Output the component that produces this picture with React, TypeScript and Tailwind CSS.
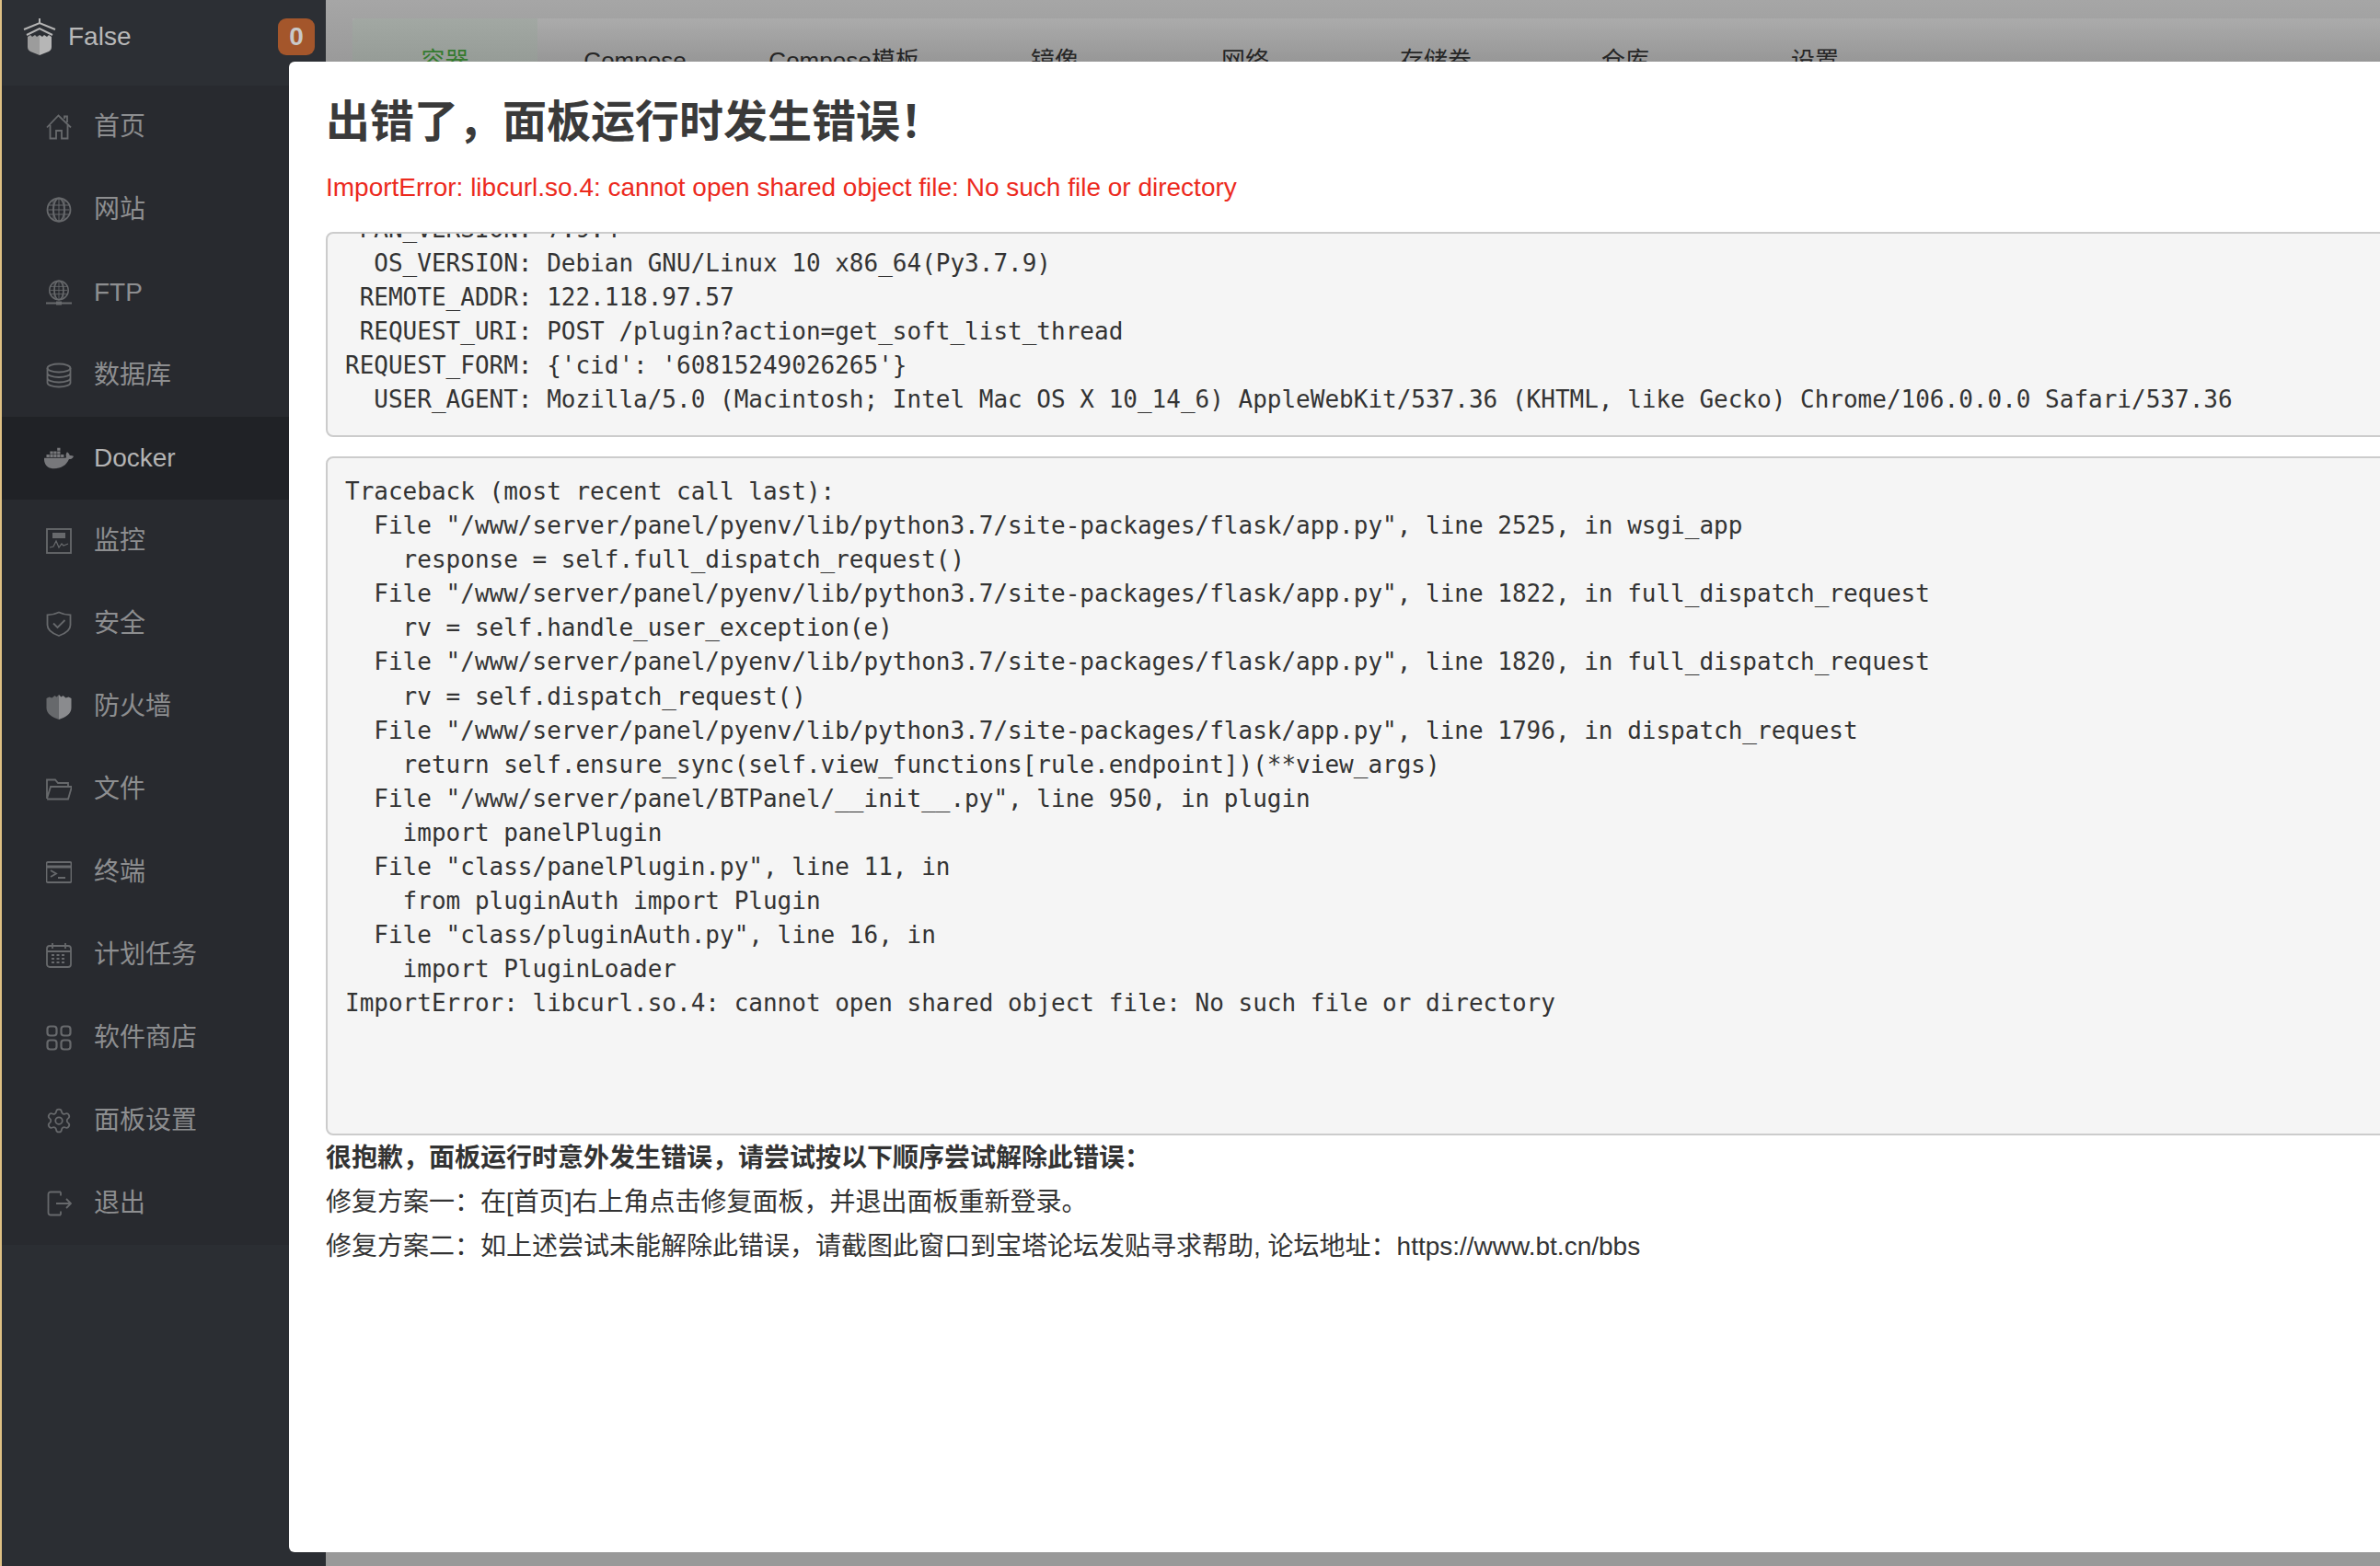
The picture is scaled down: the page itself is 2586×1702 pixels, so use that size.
import React from 'react';
import { FaDocker } from 'react-icons/fa';
import { Settings } from 'lucide-react';

const Globe = () => (
  <>
    <circle cx="14" cy="14" r="12.5" />
    <ellipse cx="14" cy="14" rx="6" ry="12.5" />
    <path d="M14 1.5v25M2.5 9h23M2.5 14h23M2.5 19h23M8 3.5v21M20 3.5v21" strokeWidth="1" />
  </>
);

const NavIcon = ({ children }: { children: React.ReactNode }) => (
  <svg viewBox="0 0 28 28" className="w-[28px] h-[28px] shrink-0 text-[#67696c]" fill="none" stroke="currentColor" strokeWidth="1.8">
    {children}
  </svg>
);

const navItems: { label: string; icon: React.ReactNode; active?: boolean }[] = [
  {
    label: '首页',
    icon: (
      <NavIcon>
        <path d="M1 14.5 13.5 1.5 27 14.5M4.5 12v14.5H11V18h6v8.5h6.500V12M20 5V2.500h3V9" />
      </NavIcon>
    ),
  },
  { label: '网站', icon: <NavIcon><Globe /></NavIcon> },
  {
    label: 'FTP',
    icon: (
      <NavIcon>
        <g transform="translate(2.500 0) scale(0.82)"><Globe /></g>
        <path d="M0 25.500h28" strokeWidth="2" />
        <rect x="11" y="23.500" width="6" height="4" fill="currentColor" stroke="none" />
      </NavIcon>
    ),
  },
  {
    label: '数据库',
    icon: (
      <NavIcon>
        <ellipse cx="14" cy="6" rx="12.500" ry="4.500" />
        <path d="M1.500 6v16c0 2.500 5.600 4.500 12.500 4.500s12.500-2 12.500-4.500V6M1.500 11.500c0 2.500 5.600 4.500 12.500 4.500s12.500-2 12.500-4.500M1.500 17c0 2.500 5.600 4.500 12.500 4.500S26.500 19.500 26.500 17" />
      </NavIcon>
    ),
  },
  {
    label: 'Docker',
    active: true,
    icon: <FaDocker className="w-[32px] h-[32px] -ml-[2px] -mr-[2px] shrink-0 text-[#77787b]" />,
  },
  {
    label: '监控',
    icon: (
      <NavIcon>
        <rect x="1" y="1" width="26" height="26" />
        <rect x="7" y="5" width="14" height="6" fill="currentColor" stroke="none" />
        <path d="M4 21l4-1 3-6 3 7 3-4 2 2 5-2" strokeWidth="1.200" />
      </NavIcon>
    ),
  },
  {
    label: '安全',
    icon: (
      <NavIcon>
        <path d="M14 1.500c4 2 8 2.800 12.500 2.800v11c0 5.500-6 9.500-12.500 11.700C7.500 24.800 1.500 20.800 1.500 15.300v-11C6 4.300 10 3.500 14 1.500z" />
        <path d="M8 13.500l4.500 4.500 8-8" />
      </NavIcon>
    ),
  },
  {
    label: '防火墙',
    icon: (
      <NavIcon>
        <path d="M14 1v27C7 25.500 0.500 22 0.500 15.500V5l3 -1.500 3 1 3-2.500 2 1.500z" fill="currentColor" stroke="none" />
        <path d="M14 1v27c7-2.500 13.500-6 13.500-12.500V5l-3-1.500-3 1-3-2.500-2 1.500z" fill="#8a8b8e" stroke="none" />
      </NavIcon>
    ),
  },
  {
    label: '文件',
    icon: (
      <NavIcon>
        <path d="M1 24V3.500h9l3 3.500h11v4M1 24 5 11h23l-4 13.500H1" />
      </NavIcon>
    ),
  },
  {
    label: '终端',
    icon: (
      <NavIcon>
        <rect x="0.500" y="3" width="27" height="22" rx="1.500" />
        <path d="M0.500 8h27" strokeWidth="3" />
        <path d="M5 12l6 3.500-6 3.500M13 20h8" />
      </NavIcon>
    ),
  },
  {
    label: '计划任务',
    icon: (
      <NavIcon>
        <rect x="1" y="4" width="26" height="23" rx="3" />
        <path d="M7 1v6M21 1v6M1 10h26" />
        <path d="M6 14h16M6 18h16M6 22h16" strokeWidth="2" strokeDasharray="3 2.500" />
      </NavIcon>
    ),
  },
  {
    label: '软件商店',
    icon: (
      <NavIcon>
        <rect x="1.500" y="1.500" width="10" height="10" rx="3" strokeWidth="2.200" />
        <rect x="16.500" y="1.500" width="10" height="10" rx="3" strokeWidth="2.200" />
        <rect x="1.500" y="16.500" width="10" height="10" rx="3" strokeWidth="2.200" />
        <rect x="16.500" y="16.500" width="10" height="10" rx="3" strokeWidth="2.200" />
      </NavIcon>
    ),
  },
  {
    label: '面板设置',
    icon: <Settings className="w-[30px] h-[30px] -ml-[1px] -mr-[1px] shrink-0 text-[#67696c]" strokeWidth={1.4} />,
  },
  {
    label: '退出',
    icon: (
      <NavIcon>
        <path d="M16 1.500H5a2.500 2.500 0 0 0-2.500 2.500v20A2.500 2.500 0 0 0 5 26.500h11M11 14h16M22 9l5 5-5 5M16 1.500v4M16 22.500v4" />
      </NavIcon>
    ),
  },
];

const tabs: { label: string; width: string; active?: boolean }[] = [
  { label: '容器', width: 'w-[201px]', active: true },
  { label: 'Compose', width: 'w-[212px]' },
  { label: 'Compose模板', width: 'w-[242px]' },
  { label: '镜像', width: 'w-[216px]' },
  { label: '网络', width: 'w-[198px]' },
  { label: '存储卷', width: 'w-[216px]' },
  { label: '仓库', width: 'w-[196px]' },
  { label: '设置', width: 'w-[216px]' },
];

const requestInfo = ` PAN_VERSION: 7.9.4
  OS_VERSION: Debian GNU/Linux 10 x86_64(Py3.7.9)
 REMOTE_ADDR: 122.118.97.57
 REQUEST_URI: POST /plugin?action=get_soft_list_thread
REQUEST_FORM: {'cid': '60815249026265'}
  USER_AGENT: Mozilla/5.0 (Macintosh; Intel Mac OS X 10_14_6) AppleWebKit/537.36 (KHTML, like Gecko) Chrome/106.0.0.0 Safari/537.36`;

const traceback = `Traceback (most recent call last):
  File "/www/server/panel/pyenv/lib/python3.7/site-packages/flask/app.py", line 2525, in wsgi_app
    response = self.full_dispatch_request()
  File "/www/server/panel/pyenv/lib/python3.7/site-packages/flask/app.py", line 1822, in full_dispatch_request
    rv = self.handle_user_exception(e)
  File "/www/server/panel/pyenv/lib/python3.7/site-packages/flask/app.py", line 1820, in full_dispatch_request
    rv = self.dispatch_request()
  File "/www/server/panel/pyenv/lib/python3.7/site-packages/flask/app.py", line 1796, in dispatch_request
    return self.ensure_sync(self.view_functions[rule.endpoint])(**view_args)
  File "/www/server/panel/BTPanel/__init__.py", line 950, in plugin
    import panelPlugin
  File "class/panelPlugin.py", line 11, in
    from pluginAuth import Plugin
  File "class/pluginAuth.py", line 16, in
    import PluginLoader
ImportError: libcurl.so.4: cannot open shared object file: No such file or directory`;

export default function App() {
  return (
    <div className="relative flex h-[1702px] w-[2586px] overflow-hidden bg-[#999999] font-['Liberation_Sans','Noto_Sans_CJK_SC',sans-serif] text-[28px] text-[#333333]">
      {/* Sidebar */}
      <aside className="flex w-[354px] shrink-0 flex-col border-l-2 border-[#dec084] bg-[#2b2e33]">
        <div className="flex h-[93px] items-start bg-[#2c2f34] pt-[20px] pl-[23px] pr-[12px]">
          <svg viewBox="0 0 36 40" className="h-[40px] w-[36px] shrink-0">
            <path d="M18 0v5M1 12 18 5l17 7M4 18 18 11l14 7" stroke="#b4b4b4" strokeWidth="2" fill="none" />
            <path d="M5 20l3-2 2 2 3-2 2 2 3-2v22L8 36c-2-1-3-3-3-5z" fill="#9c9c9c" />
            <path d="M18 18l3 2 2-2 3 2 2-2 3 2v11c0 2-1 4-3 5l-10 4z" fill="#b6b6b6" />
          </svg>
          <span className="ml-[13px] leading-[40px] text-[#b8b8b8]">False</span>
          <span className="ml-auto flex h-[40px] w-[40px] items-center justify-center rounded-[9px] bg-[#a4562b] font-bold text-[#c9c9c9]">0</span>
        </div>
        <nav className="flex flex-col bg-[#282a2f]">
          {navItems.map((item) => (
            <div
              key={item.label}
              className={
                item.active
                  ? 'flex h-[90px] items-center gap-[24px] bg-[#202226] pl-[48px] text-[#b4b4b4]'
                  : 'flex h-[90px] items-center gap-[24px] pl-[48px] text-[#8d8e90]'
              }
            >
              {item.icon}
              <span>{item.label}</span>
            </div>
          ))}
        </nav>
      </aside>

      {/* Dimmed page behind the dialog */}
      <main className="min-w-0 flex-1">
        <div className="h-[67px] overflow-hidden bg-linear-to-b from-[#a6a6a6] to-[#9a9a9a] pt-[20px]">
          <div className="ml-[29px] flex h-[47px] bg-linear-to-b from-[#ababab] to-[#979797] text-[26px]">
            {tabs.map((tab) => (
              <div
                key={tab.label}
                className={
                  tab.active
                    ? `${tab.width} shrink-0 rounded-tl-[4px] bg-linear-to-b from-[#a2a8a3] to-[#969c97] pt-[26px] text-center leading-[40px] text-[#357a2f]`
                    : `${tab.width} shrink-0 pt-[26px] text-center leading-[40px] text-[#262626]`
                }
              >
                {tab.label}
              </div>
            ))}
          </div>
        </div>
      </main>

      {/* Error dialog */}
      <section className="absolute top-[67px] left-[314px] h-[1620px] w-[2400px] rounded-[6px] bg-white pt-[40px] pl-[40px]">
        <h3 className="text-[48px] leading-[52px] font-bold text-[#3a3a3a]">出错了，面板运行时发生错误！</h3>
        <p className="mt-[25px] leading-[40px] text-[#ec2a1e]">ImportError: libcurl.so.4: cannot open shared object file: No such file or directory</p>
        <pre className="mt-[28px] h-[223px] overflow-hidden rounded-[8px] border-2 border-[#cccccc] bg-[#f5f5f5] pl-[19px] leading-[37.1px]">
          <code className="-mt-[23px] block font-['DejaVu_Sans_Mono',monospace] text-[26px]">{requestInfo}</code>
        </pre>
        <pre className="mt-[21px] h-[738px] overflow-hidden rounded-[8px] border-2 border-[#cccccc] bg-[#f5f5f5] pt-[18px] pl-[19px] leading-[37.1px]">
          <code className="block font-['DejaVu_Sans_Mono',monospace] text-[26px]">{traceback}</code>
        </pre>
        <div className="mt-[1px] leading-[48.2px]">
          <p className="font-bold">很抱歉，面板运行时意外发生错误，请尝试按以下顺序尝试解除此错误：</p>
          <p>修复方案一：在[首页]右上角点击修复面板，并退出面板重新登录。</p>
          <p>修复方案二：如上述尝试未能解除此错误，请截图此窗口到宝塔论坛发贴寻求帮助, 论坛地址：https://www.bt.cn/bbs</p>
        </div>
      </section>
    </div>
  );
}
